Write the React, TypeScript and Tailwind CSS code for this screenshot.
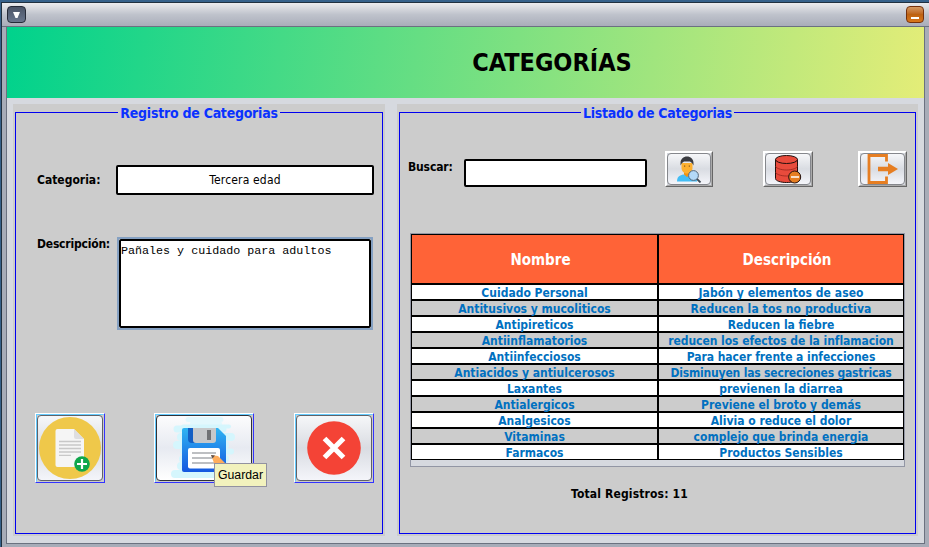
import type { ReactNode } from "react";

const rows: [string, string, string?][] = [
  ["Cuidado Personal", "Jabón y elementos de aseo", "tracking-[0.07px]"],
  ["Antitusivos y mucoliticos", "Reducen la tos no productiva", "tracking-[0.1px]"],
  ["Antipireticos", "Reducen la fiebre"],
  ["Antiinflamatorios", "reducen los efectos de la inflamacion", "tracking-[-0.05px]"],
  ["Antiinfecciosos", "Para hacer frente a infecciones", "tracking-[-0.05px]"],
  ["Antiacidos y antiulcerosos", "Disminuyen las secreciones gastricas", "tracking-[-0.18px]"],
  ["Laxantes", "previenen la diarrea"],
  ["Antialergicos", "Previene el broto y demás"],
  ["Analgesicos", "Alivia o reduce el dolor"],
  ["Vitaminas", "complejo que brinda energia"],
  ["Farmacos", "Productos Sensibles"],
];

function Panel({ title, className, titleClass, children }: { title: string; className: string; titleClass: string; children: ReactNode }) {
  return (
    <section className={`h-[432px] shrink-0 bg-[#ccc] px-[2px] pt-2 pb-[2px] ${className}`}>
      <div className="flex h-full flex-col border border-[#0000f0]">
        <h2 className={`z-10 -mt-[9px] h-[18px] self-center bg-[#ccc] px-[2px] text-[14px] leading-[18px] font-bold whitespace-nowrap text-[#0a32ff] ${titleClass}`}>{title}</h2>
        {children}
      </div>
    </section>
  );
}

function BigButton({ className, face, label, children }: { className: string; face: string; label: string; children: ReactNode }) {
  return (
    <button aria-label={label} className={`h-[70px] shrink-0 border-t border-r border-b border-l border-t-white border-r-[#3333ff] border-b-[#3333ff] border-l-white ${className}`}>
      <span className="block h-full border-t border-r border-b border-l border-t-[#66ccff] border-r-[#ccc] border-b-[#ccc] border-l-[#66ccff]">
        <span className={`flex h-full items-center justify-center rounded-[4px] border ${face}`}>{children}</span>
      </span>
    </button>
  );
}

function SmallButton({ className, label, children }: { className: string; label: string; children: ReactNode }) {
  return (
    <button aria-label={label} className={`h-9 shrink-0 border-t border-r border-b border-l border-t-white border-r-[#666] border-b-[#666] border-l-white ${className}`}>
      <span className="block h-full border-t border-r border-b border-l border-t-white border-r-[#aaa] border-b-[#aaa] border-l-white bg-[#d6d9df]">
        <span className="flex h-full items-center justify-center rounded-[4px] border border-[#85878c] bg-linear-to-b from-[#f6f7f9] via-[#d9dce2] to-[#f4f5fa]">{children}</span>
      </span>
    </button>
  );
}

function NewDocIcon() {
  return (
    <svg width="62" height="62" viewBox="0 0 62 62">
      <circle cx="31" cy="31" r="31" fill="#efc84a" />
      <path d="M18.500 12H35l10 10v26a2 2 0 0 1-2 2H18.500a2 2 0 0 1-2-2V14a2 2 0 0 1 2-2z" fill="#f5f5f5" />
      <path d="M35 12l10 10h-8a2 2 0 0 1-2-2z" fill="#dedee0" />
      <path d="M20 24.500h22M20 28h22M20 31.500h22M20 35h22M20 38.300h12" stroke="#c8c8c8" strokeWidth="1.300" />
      <circle cx="43" cy="47" r="7.800" fill="#0fa64b" />
      <path d="M43 42v10M38 47h10" stroke="#fff" strokeWidth="2.200" />
    </svg>
  );
}

function SaveIcon() {
  return (
    <svg width="66" height="62" viewBox="0 0 66 62">
      <defs>
        <linearGradient id="disk" x1="0" y1="0" x2="0" y2="1">
          <stop offset="0" stopColor="#2fb4f2" />
          <stop offset="1" stopColor="#1457e0" />
        </linearGradient>
      </defs>
      <g stroke="#d5f6fd" strokeLinecap="round" fill="none">
        <path d="M17 2.500h33" strokeWidth="5" stroke="#e3f8fd" />
        <path d="M22 7h26" strokeWidth="6" stroke="#e3f8fd" />
        <path d="M6 12h46" strokeWidth="7" />
        <path d="M12 9.500h46" strokeWidth="4" />
        <path d="M10 20h50" strokeWidth="8" />
        <path d="M6 28h48" strokeWidth="8" />
        <path d="M12 34.500h48" strokeWidth="6" />
        <path d="M12 42h42M10 49h44" strokeWidth="8" />
        <path d="M4 57h40" strokeWidth="8" />
      </g>
      <path d="M13 11h34l8 8v34a2 2 0 0 1-2 2H13a2 2 0 0 1-2-2V13a2 2 0 0 1 2-2z" fill="url(#disk)" />
      <path d="M17 11h8v15h-4a4 4 0 0 1-4-4z" fill="#145fc4" />
      <path d="M22 11h23v12a3 3 0 0 1-3 3H25a3 3 0 0 1-3-3z" fill="#c6c8ca" />
      <path d="M36 13h4v10h-4z" fill="#707275" />
      <rect x="17" y="31" width="32" height="20.500" rx="2" fill="#fff" />
      <path d="M21 36h24M21 41h20M21 46h24" stroke="#bdbfc2" strokeWidth="2" />
      <path d="M40 38l7 1 9 9-6 7-7-9z" fill="#ffad5c" />
      <path d="M40 38l4 .5-2.500 3z" fill="#5b5354" />
    </svg>
  );
}

function CancelIcon() {
  return (
    <svg width="54" height="54" viewBox="0 0 54 54">
      <circle cx="27" cy="27" r="26.800" fill="#f44336" />
      <path d="M17.500 17.500l19 19M36.500 17.500l-19 19" stroke="#fff" strokeWidth="5.200" />
    </svg>
  );
}

function UserSearchIcon() {
  return (
    <svg width="26" height="28" viewBox="0 0 26 28">
      <path d="M1 26.500c0-4.500 2-6 6-7h8c4 1 6 3 6 7z" fill="#43bdf5" />
      <path d="M8 16h6v3.500l-3 2.500-3-2.500z" fill="#f09212" />
      <path d="M5.500 8h11v5c0 3-2.500 5.500-5.500 5.500S5.500 16 5.500 13z" fill="#fdb02f" />
      <path d="M4.500 10.500V8c0-4 3-6.500 6.500-6.500S17.500 4 17.500 8v2.500L16 8l-2-1.500H8L6 8z" fill="#3a3b40" />
      <path d="M8.700 10.500v1.200M13.300 10.500v1.200" stroke="#704010" strokeWidth="1" />
      <path d="M20.500 23.500l4 4" stroke="#3f4a55" strokeWidth="1.800" />
      <circle cx="17.500" cy="20.500" r="4.900" fill="#b4d9f8" stroke="#56677a" strokeWidth="1" />
    </svg>
  );
}

function DatabaseIcon() {
  return (
    <svg width="28" height="30" viewBox="0 0 28 30">
      <path d="M1.500 5.500v19c0 2.300 5 4 11 4s11-1.700 11-4v-19" fill="#e84b3c" stroke="#22100e" strokeWidth="1" />
      <ellipse cx="12.500" cy="5.500" rx="11" ry="4" fill="#e84b3c" stroke="#22100e" strokeWidth="1" />
      <path d="M1.500 12c0 2 5 4 11 4s11-2 11-4M1.500 18c0 2 5 4 11 4s11-2 11-4" fill="none" stroke="#8c211a" strokeWidth=".7" />
      <circle cx="20.700" cy="23" r="6" fill="#e67e22" stroke="#22100e" strokeWidth="1" />
      <path d="M17 23h8" stroke="#fff" strokeWidth="1.500" />
    </svg>
  );
}

function ExitIcon() {
  return (
    <svg width="31" height="30" viewBox="0 0 31 30">
      <path d="M19.500 7.500V1.500H2v27h17.500V22.500" fill="none" stroke="#e67e22" strokeWidth="2.800" />
      <path d="M11 12.800h10V9l10 6-10 6v-3.800H11z" fill="#e67e22" />
    </svg>
  );
}

function TitleBar() {
  return (
    <header className="flex h-6 shrink-0 items-start justify-between border-b border-[#6b7180] bg-linear-to-b from-[#ececee] via-[#bfc3cc] to-[#a9adb9] pr-[5px] pl-[5px]">
      <div className="mt-[3px] flex h-[17px] w-[19px] items-center justify-center rounded-[4px] border border-[#252b38] bg-linear-to-b from-[#4b5567] to-[#69768d]">
        <svg width="7" height="6" viewBox="0 0 7 6"><path d="M0 0h7L4.500 6h-2z" fill="#fff" /></svg>
      </div>
      <div className="mt-[3px] flex h-[17px] w-[18px] items-end justify-center rounded-[4px] border border-[#75310b] bg-linear-to-b from-[#d49a62] via-[#bd6212] to-[#d9771b] pb-[3px]">
        <span className="h-[2px] w-2 bg-white" />
      </div>
    </header>
  );
}

export default function App() {
  return (
    <div className="h-[547px] w-[929px] overflow-hidden bg-[#36618a] pt-[2px] pl-px font-['DejaVu_Sans_Condensed','DejaVu_Sans',sans-serif] text-black">
      <div className="flex h-[545px] flex-col border-t border-l border-[#20303f] bg-[#a7acb8]">
        <TitleBar />
        <main className="mr-1 ml-1 h-[517px] shrink-0 border-r border-b border-l border-[#6b7180] bg-[#d6d9df]">
          <div className="flex h-[71px] items-center justify-center bg-[linear-gradient(98deg,#00d28c,#e4ed78)] pl-[173px]">
            <h1 className="text-[25px] leading-8 font-bold">CATEGORÍAS</h1>
          </div>
          <div className="flex gap-3 pt-[6px] pl-[6px]">
            <Panel title="Registro de Categorias" className="w-[372px]" titleClass="tracking-[-0.25px]">
              <div className="mt-[43px] flex items-center pl-[21px]">
                <label className="w-[79px] text-[12px] font-bold whitespace-nowrap">Categoria:</label>
                <div className="flex h-[30px] w-[258px] items-center justify-center rounded-[2px] border-2 border-black bg-white text-[12px] tracking-[0.17px]">Tercera edad</div>
              </div>
              <div className="mt-[42px] flex items-start pl-[21px]">
                <label className="w-20 shrink-0 text-[12px] leading-[14px] font-bold tracking-[-0.2px] whitespace-nowrap">Descripción:</label>
                <div className="h-[93px] w-[256px] shrink-0 border-2 border-[#84a0c2] bg-white">
                  <div className="h-full rounded-[2px] border-2 border-black font-['Liberation_Mono',monospace] text-[11.700px] leading-[20px] whitespace-nowrap">Pañales y cuidado para adultos</div>
                </div>
              </div>
              <div className="mt-[83px] flex pl-[19px]">
                <BigButton label="Nuevo" className="w-[70px]" face="border-[#606268] bg-linear-to-b from-[#f6f7f9] via-[#d9dce2] to-[#f4f5fa]"><NewDocIcon /></BigButton>
                <div className="relative ml-[49px]">
                  <BigButton label="Guardar" className="w-[100px]" face="border-[#303238] bg-linear-to-b from-[#fcfcfd] via-[#e7eaf1] to-white"><SaveIcon /></BigButton>
                  <div role="tooltip" className="absolute top-[50px] left-[60px] z-20 flex h-6 w-[53px] items-center justify-center border border-[#9292a0] bg-[#f2f2bd] pt-px font-['Liberation_Sans',sans-serif] text-[12.300px]">Guardar</div>
                </div>
                <BigButton label="Cancelar" className="ml-10 w-20" face="border-[#606268] bg-linear-to-b from-[#f6f7f9] via-[#d9dce2] to-[#f4f5fa]"><CancelIcon /></BigButton>
              </div>
            </Panel>
            <Panel title="Listado de Categorias" className="w-[521px]" titleClass="tracking-[-0.28px]">
              <div className="mt-[29px] flex items-start pl-2">
                <label className="mt-2 w-14 text-[12px] leading-4 font-bold tracking-[-0.15px]">Buscar:</label>
                <div className="mt-2 h-7 w-[183px] rounded-[2px] border-2 border-black bg-white" />
                <SmallButton label="Buscar" className="ml-[18px] w-12"><UserSearchIcon /></SmallButton>
                <SmallButton label="Eliminar" className="ml-[50px] w-[50px]"><DatabaseIcon /></SmallButton>
                <SmallButton label="Salir" className="ml-[45px] w-[49px]"><ExitIcon /></SmallButton>
              </div>
              <div className="mt-[46px] ml-[10px] h-[234px] w-[495px] border border-[#9296a4] bg-[#d6d9df] font-bold">
                <div className="grid h-[50px] grid-cols-[247px_246px] text-[15px] text-white">
                  <div className="flex items-center justify-center border border-black bg-[#ff6337] pt-[2px] pl-3">Nombre</div>
                  <div className="flex items-center justify-center border border-black bg-[#ff6337] pt-[2px] pl-3">Descripción</div>
                </div>
                {rows.map(([name, desc, spacing], i) => (
                  <div key={name} className={`grid h-4 grid-cols-[247px_246px] text-center text-[12px] leading-4 whitespace-nowrap text-[#0070c0] ${i % 2 ? "bg-[#ccc]" : "bg-white"}`}>
                    <div className="h-4 border border-black">{name}</div>
                    <div className={`h-4 border border-black ${spacing ?? ""}`}>{desc}</div>
                  </div>
                ))}
              </div>
              <p className="mt-[19px] ml-[171px] text-[12px] leading-[17px] font-bold tracking-[0.15px]">Total Registros: 11</p>
            </Panel>
          </div>
        </main>
      </div>
    </div>
  );
}
